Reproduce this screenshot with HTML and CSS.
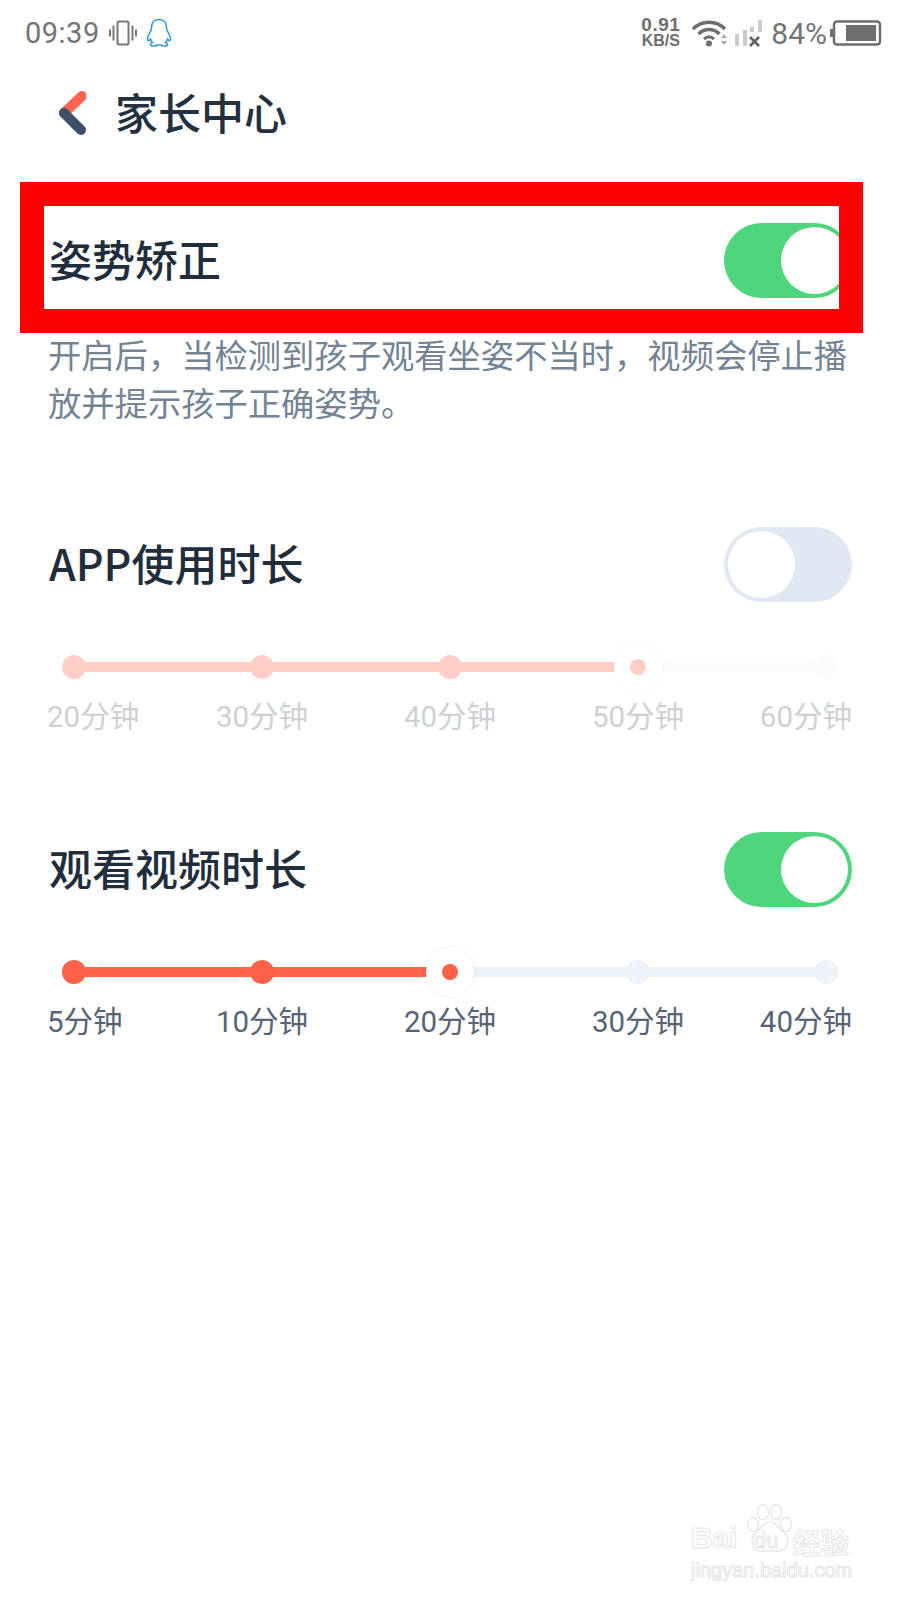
FILE: index.html
```html
<!DOCTYPE html>
<html lang="zh-CN">
<head>
<meta charset="utf-8">
<title>家长中心</title>
<link rel="stylesheet" href="styles.css">
</head>
<body>
<div class="page">
  <div class="status">
    <div class="status-left">
      <span class="time">09:39</span>
      <svg class="ico-vib" viewBox="0 0 28 28" width="28" height="28"><rect x="8.500" y="2.500" width="11" height="23" rx="1.500" fill="none" stroke="#777" stroke-width="2"/><path d="M4.500 6.500v15M23.500 6.500v15" stroke="#777" stroke-width="2" fill="none"/><path d="M1 10.500v7M27 10.500v7" stroke="#777" stroke-width="2" fill="none"/></svg>
      <svg class="ico-qq" viewBox="0 0 28 30" width="28" height="30"><path d="M14 1.500c-5 0-7.500 3.500-7.500 8 0 1.500 0 2-.5 3-1.500 2.500-3.500 5.500-3.500 8.500 0 1.500 .7 2 1.500 1.500l1.500-1.500c.3 1.300 1 2.500 2 3.500-1.800.6-2.500 1.500-2 2.600 .4.900 2.500 1 4.500 .8 1.300-.2 2.500-.9 3-.9h2c.5 0 1.700.7 3 .9 2 .2 4.100.1 4.500-.8.5-1.100-.2-2-2-2.600 1-1 1.700-2.200 2-3.500l1.500 1.500c.8.500 1.500 0 1.500-1.500 0-3-2-6-3.500-8.500-.5-1-.5-1.500-.5-3 0-4.500-2.500-8-7.500-8z" fill="none" stroke="#2f94d8" stroke-width="1.500"/></svg>
    </div>
    <div class="status-right">
      <div class="speed"><span class="speed-num">0.91</span><span class="speed-unit">KB/S</span></div>
      <svg class="ico-wifi" viewBox="0 0 38 28" width="38" height="28"><path d="M2 10C11 1 25 1 34 10" fill="none" stroke="#6e6e6e" stroke-width="3.500"/><path d="M7.500 15C13.500 9 22.500 9 28.500 15" fill="none" stroke="#6e6e6e" stroke-width="3.500"/><path d="M13 20c3.200-2.800 6.800-2.800 10 0" fill="none" stroke="#6e6e6e" stroke-width="3"/><circle cx="18" cy="24.500" r="3" fill="#6e6e6e"/><path d="M30 19l3-4 3 4zM30 22h6l-3 4z" fill="#aaa"/></svg>
      <svg class="ico-sig" viewBox="0 0 30 28" width="30" height="28"><rect x="1" y="15" width="4" height="12" fill="#ccc"/><rect x="9" y="11" width="4" height="16" fill="#ccc"/><rect x="16" y="8" width="4" height="5" fill="#ccc"/><rect x="24" y="1" width="4" height="12" fill="#ccc"/><path d="M16 18l9 9M25 18l-9 9" stroke="#666" stroke-width="2.800"/></svg>
      <span class="pct">84%</span>
      <svg class="ico-bat" viewBox="0 0 52 26" width="52" height="26"><rect x="0" y="9" width="3" height="8" fill="#6e6e6e"/><rect x="4" y="1.500" width="46" height="23" rx="3" fill="none" stroke="#6e6e6e" stroke-width="2.500"/><rect x="16" y="5" width="30" height="16" fill="#6e6e6e"/></svg>
    </div>
  </div>

  <div class="header">
    <svg class="back" viewBox="0 0 32 46" width="32" height="46"><path d="M28 6L10 23" stroke="#ff6550" stroke-width="10" stroke-linecap="round" fill="none"/><path d="M10 23L27 40" stroke="#3c5068" stroke-width="10" stroke-linecap="round" fill="none"/></svg>
    <h1 class="page-title">家长中心</h1>
  </div>

  <section class="block block-posture">
    <div class="row">
      <h2 class="row-title">姿势矫正</h2>
      <div class="toggle on"><span class="knob"></span></div>
    </div>
    <p class="desc">开启后，当检测到孩子观看坐姿不当时，视频会停止播放并提示孩子正确姿势。</p>
  </section>

  <section class="block block-app">
    <div class="row">
      <h2 class="row-title">APP使用时长</h2>
      <div class="toggle off"><span class="knob"></span></div>
    </div>
    <div class="slider faded">
      <div class="track">
        <span class="dot done"></span><span class="seg done"></span>
        <span class="dot done"></span><span class="seg done"></span>
        <span class="dot done"></span><span class="seg done"></span>
        <span class="thumb"><span class="thumb-in"></span></span><span class="seg"></span>
        <span class="dot"></span>
      </div>
      <div class="labels"><span>20分钟</span><span>30分钟</span><span>40分钟</span><span>50分钟</span><span>60分钟</span></div>
    </div>
  </section>

  <section class="block block-video">
    <div class="row">
      <h2 class="row-title">观看视频时长</h2>
      <div class="toggle on"><span class="knob"></span></div>
    </div>
    <div class="slider">
      <div class="track">
        <span class="dot done"></span><span class="seg done"></span>
        <span class="dot done"></span><span class="seg done"></span>
        <span class="thumb"><span class="thumb-in"></span></span><span class="seg"></span>
        <span class="dot"></span><span class="seg"></span>
        <span class="dot"></span>
      </div>
      <div class="labels"><span>5分钟</span><span>10分钟</span><span>20分钟</span><span>30分钟</span><span>40分钟</span></div>
    </div>
  </section>

  <div class="highlight"></div>

  <div class="watermark">
    <svg class="paw" viewBox="0 0 60 66" width="46" height="52"><g fill="#fff" stroke="#e6e6e6" stroke-width="1.800"><ellipse cx="8" cy="27" rx="7" ry="9"/><ellipse cx="21" cy="11" rx="7" ry="10"/><ellipse cx="38" cy="11" rx="7" ry="10"/><ellipse cx="51" cy="27" rx="7" ry="9"/><path d="M30 24c-9 0-11 8-18 14-8 6-8 24 8 24 4 0 6-1 10-1s6 1 10 1c16 0 16-18 8-24-7-6-9-14-18-14z"/></g></svg>
    <span class="wm-bai">Bai</span><span class="wm-du">du</span><span class="wm-jy">经验</span>
    <span class="wm-url">jingyan.baidu.com</span>
  </div>
</div>
</body>
</html>
```
FILE: styles.css
```css
* { box-sizing: border-box; }
html, body { margin: 0; padding: 0; background: #fff; }
body { font-family: "Noto Sans CJK SC", "Noto Sans", sans-serif; }
.page { position: relative; width: 900px; height: 1600px; overflow: hidden; background: #fff; }

.status { display: flex; justify-content: space-between; align-items: center; height: 66px; padding: 0 18px 0 25px; color: #707070; }
.status-left, .status-right { display: flex; align-items: center; }
.time { font-family: Roboto, "Liberation Sans", sans-serif; font-size: 29px; letter-spacing: .5px; color: #747474; margin-right: 9px; }
.ico-qq { margin-left: 8px; }
.speed { display: flex; flex-direction: column; align-items: center; font-family: "Liberation Sans", sans-serif; font-weight: 700; color: #6e6e6e; line-height: 16px; margin-right: 11px; }
.speed-num { font-size: 19px; letter-spacing: .5px; }
.speed-unit { font-size: 16px; }
.ico-sig { margin: 0 7px 0 5px; }
.pct { font-family: Roboto, "Liberation Sans", sans-serif; font-size: 30px; color: #747474; }
.ico-bat { margin-left: 3px; }

.header { display: flex; align-items: center; height: 94px; padding-left: 54px; }
.page-title { margin: 0 0 0 29px; padding-bottom: 4px; font-size: 43px; line-height: 60px; font-weight: 500; color: #23303f; }

.block { padding: 0 48px; }
.block-posture { margin-top: 63px; }
.block-app { margin-top: 101px; }
.block-video { margin-top: 95px; }

.row { display: flex; justify-content: space-between; align-items: center; height: 75px; }
.row-title { margin: 0 0 0 1px; padding-bottom: 6px; font-size: 43px; line-height: 60px; font-weight: 500; color: #1f2d3d; }

.toggle { display: flex; align-items: center; width: 128px; height: 75px; border-radius: 38px; padding: 0 4px; }
.toggle.on { background: #4fd67d; justify-content: flex-end; }
.toggle.off { background: #e0e8f4; justify-content: flex-start; }
.knob { display: block; width: 67px; height: 67px; border-radius: 50%; background: #fff; }

.desc { margin: 32px 0 0 0; width: 808px; font-size: 33.300px; line-height: 48px; color: #748394; }

.slider { margin-top: 41px; }
.track { display: flex; align-items: center; height: 48px; padding: 0 14px; }
.dot { flex: none; width: 24px; height: 24px; border-radius: 50%; background: #eef3fa; }
.dot.done { background: #ff6248; }
.seg { flex: 1; height: 10px; margin: 0 -1px; background: #eef3fa; }
.seg.done { background: #ff6248; }
.thumb { flex: none; display: flex; align-items: center; justify-content: center; width: 48px; height: 48px; margin: 0 -12px; border-radius: 50%; background: #fff; box-shadow: 0 0 5px rgba(90, 110, 140, .12); position: relative; }
.thumb-in { width: 16px; height: 16px; border-radius: 50%; background: #ff6248; }

.labels { display: grid; grid-template-columns: 120px repeat(3, 188px) 120px; margin-top: 6px; font-family: Roboto, "Noto Sans CJK SC", sans-serif; font-size: 29.500px; line-height: 40px; color: #566475; }
.labels span { justify-self: center; }
.labels span:first-child { justify-self: start; margin-left: -1px; }
.labels span:last-child { justify-self: end; }

.faded .thumb-in { background: #ffcfc7; }
.faded .dot, .faded .seg { background: #f9fbfd; }
.faded .dot.done, .faded .seg.done { background: #ffcfc7; }
.faded .thumb { box-shadow: 0 0 5px rgba(90, 110, 140, .05); }
.faded .labels { color: #cdd1d6; }

.highlight { position: absolute; left: 20px; top: 182px; width: 843px; height: 151px; border: 24px solid #fe0000; }

.watermark { position: absolute; left: 691px; top: 1500px; width: 170px; height: 90px; color: #fff; -webkit-text-stroke: 1px #e6e6e6; }
.paw { position: absolute; left: 56px; top: 3px; }
.wm-bai { position: absolute; left: 0; top: 21px; font-family: "Liberation Sans", sans-serif; font-weight: 700; font-size: 30px; line-height: 34px; }
.wm-du { position: absolute; left: 63px; top: 29px; font-family: "Liberation Sans", sans-serif; font-size: 22px; line-height: 24px; }
.wm-jy { position: absolute; left: 102px; top: 27px; font-size: 28px; line-height: 30px; font-weight: 700; }
.wm-url { position: absolute; left: 0; top: 58px; font-family: "Liberation Sans", sans-serif; font-size: 20px; line-height: 24px; }
```
